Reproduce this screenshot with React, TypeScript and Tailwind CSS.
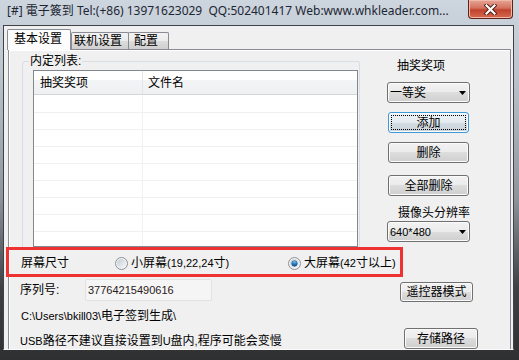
import React from 'react';

const ui = "font-['Liberation_Sans','Noto_Sans_CJK_SC',sans-serif]";

function L({ children }: { children: React.ReactNode }) {
  return <span className="text-[11px]">{children}</span>;
}

function Btn({ children, className = '', focused = false }: { children: React.ReactNode; className?: string; focused?: boolean }) {
  return (
    <div
      className={`relative flex items-center justify-center rounded-[3px] border text-[12px] leading-[14px] text-black shadow-[inset_0_0_0_1px_#fbfbfb] ${
        focused
          ? 'border-[#3c9ad8] bg-[linear-gradient(to_bottom,#eef3f6_0%,#e4ebf0_50%,#d4dde4_50%,#c8d2da_100%)]'
          : 'border-[#707070] bg-[linear-gradient(to_bottom,#f2f2f2_0%,#ebebeb_50%,#dddddd_50%,#cfcfcf_100%)]'
      } ${className}`}
    >
      {focused && <span className="absolute inset-[2px] border border-dotted border-black" />}
      {children}
    </div>
  );
}

function Combo({ value, className = '' }: { value: React.ReactNode; className?: string }) {
  return (
    <div className={`flex h-[21px] w-[83px] items-center rounded-[3px] border border-[#707070] bg-[linear-gradient(to_bottom,#f2f2f2_0%,#ebebeb_50%,#dddddd_50%,#cfcfcf_100%)] pl-[2px] text-[12px] leading-[14px] text-black shadow-[inset_0_0_0_1px_#fbfbfb] ${className}`}>
      <span>{value}</span>
      <svg className="ml-auto mr-[3px]" width="7" height="4" viewBox="0 0 7 4">
        <path d="M0 0 H7 L3.5 4 Z" fill="#000" />
      </svg>
    </div>
  );
}

function Radio({ checked, id }: { checked?: boolean; id: string }) {
  return (
    <svg width="13" height="13" viewBox="0 0 13 13" className="shrink-0">
      <defs>
        <linearGradient id={`bg-${id}`} x1="0" y1="0" x2="1" y2="1">
          <stop offset="0" stopColor="#c3ccd6" />
          <stop offset="1" stopColor="#f6f8fa" />
        </linearGradient>
        <linearGradient id={`dot-${id}`} x1="0" y1="0" x2="0" y2="1">
          <stop offset="0" stopColor="#8fd4f5" />
          <stop offset="0.5" stopColor="#2a8bd0" />
          <stop offset="1" stopColor="#0b4c90" />
        </linearGradient>
      </defs>
      <circle cx="6.5" cy="6.5" r="6" fill="#f4f4f4" stroke="#8c8f94" />
      <circle cx="6.5" cy="6.5" r="4.5" fill={`url(#bg-${id})`} />
      {checked && <circle cx="6.5" cy="6.5" r="2.8" fill={`url(#dot-${id})`} stroke="#1c3f70" strokeWidth="0.6" />}
    </svg>
  );
}

function CloseButton() {
  return (
    <div className="ml-auto mr-[6px] flex h-[19px] w-[45px] items-center justify-center rounded-b-[4px] border border-t-0 border-[#5e2219] bg-[linear-gradient(to_bottom,#e7a596_0%,#d2715d_45%,#c0432c_55%,#d66a4f_100%)] shadow-[inset_0_0_0_1px_#f0b8a8]">
      <svg width="13" height="11" viewBox="0 0 13 11">
        <path d="M2.5 1.5 L10.5 9.5 M10.5 1.5 L2.5 9.5" stroke="#4a1a12" strokeWidth="4" strokeLinecap="square" />
        <path d="M2.5 1.5 L10.5 9.5 M10.5 1.5 L2.5 9.5" stroke="#ffffff" strokeWidth="2.2" strokeLinecap="square" />
      </svg>
    </div>
  );
}

export default function App() {
  const rows = Array.from({ length: 9 });
  return (
    <div className={`flex h-[360px] w-[519px] flex-col overflow-hidden bg-[linear-gradient(to_bottom,#cdd5de_0%,#bcc5cf_20%,#8d949c_55%,#3e4043_80%,#2f3032_100%)] ${ui}`}>
      {/* title bar */}
      <div className="flex h-[25px] shrink-0 items-start">
        <div className="whitespace-pre pl-[7px] pt-[3px] font-['Noto_Sans','Noto_Sans_CJK_SC',sans-serif] text-[12px] leading-[16px] text-[#1d2733]">
          [#] 電子簽到 Tel:(+86) 13971623029  QQ:502401417 Web:www.whkleader.com...
        </div>
        <CloseButton />
      </div>

      {/* client area */}
      <div className="ml-[3px] mr-[5px] flex h-[325px] flex-col border border-[#3f4246] border-b-[#fafafa] bg-[#f0f0f0] pl-[3px] pr-[2px] pt-[3px]">
        {/* tabs */}
        <div className="flex h-[20px] shrink-0 items-end">
          <div className="relative z-10 -mb-px h-[21px] w-[64px] rounded-t-[2px] border border-b-0 border-[#898c95] bg-[#fcfcfc] pl-[6px] pt-[2px] text-[12px] leading-[14px] text-black">
            基本设置
          </div>
          <div className="h-[17px] w-[58px] rounded-t-[2px] border border-b-0 border-[#898c95] bg-[linear-gradient(to_bottom,#f3f3f3_0%,#ebebeb_50%,#dddddd_50%,#cfcfcf_100%)] pl-[2px] pt-px text-[12px] leading-[14px] text-black">
            联机设置
          </div>
          <div className="-ml-px h-[17px] w-[41px] rounded-t-[2px] border border-b-0 border-[#898c95] bg-[linear-gradient(to_bottom,#f3f3f3_0%,#ebebeb_50%,#dddddd_50%,#cfcfcf_100%)] pl-[5px] pt-px text-[12px] leading-[14px] text-black">
            配置
          </div>
        </div>

        {/* tab page */}
        <div className="ml-px flex flex-1 flex-col border border-b-0 border-[#898c95] shadow-[inset_1px_1px_0_#ffffff] text-[12px] leading-[14px] text-black">
          {/* list + right column */}
          <div className="flex h-[197px] shrink-0">
            <fieldset className="ml-[13px] mt-[4px] h-[193px] w-[338px] rounded-t-[3px] border border-b-0 border-[#d5dfe5] pl-[6px]">
              <legend className="px-px text-[12px] leading-[14px]">内定列表:</legend>
              <div className="ml-[4px] mt-[2px] flex h-[177px] w-[325px] flex-col overflow-hidden border border-[#828790] bg-white">
                <div className="flex h-[24px] shrink-0 border-b border-[#d5d5d5] bg-[linear-gradient(to_bottom,#ffffff_0%,#ffffff_40%,#f3f4f6_41%,#eff0f2_100%)]">
                  <div className="flex w-[109px] items-center border-r border-[#e3e5e8] pl-[6px]">抽奖奖项</div>
                  <div className="flex items-center pl-[5px]">文件名</div>
                </div>
                <div className="h-px shrink-0" />
                {rows.map((_, i) => (
                  <div key={i} className="flex h-[17px] shrink-0 border-b border-[#f0f0f0]">
                    <div className="w-[109px] border-r border-[#f0f0f0]" />
                  </div>
                ))}
              </div>
            </fieldset>

            <div className="ml-[27px] flex w-[83px] flex-col">
              <div className="mt-[9px] pl-[10px]">抽奖奖项</div>
              <Combo className="mt-[9px]" value="一等奖" />
              <Btn focused className="ml-px mt-[9px] h-[21px] w-[81px]">添加</Btn>
              <Btn className="ml-px mt-[9px] h-[21px] w-[81px]">删除</Btn>
              <Btn className="ml-px mt-[12px] h-[21px] w-[81px]">全部删除</Btn>
              <div className="mt-[10px] whitespace-nowrap pl-[11px]">摄像头分辨率</div>
              <Combo className="mt-px" value={<L>640*480</L>} />
            </div>
          </div>

          {/* highlighted screen size row */}
          <div className="-ml-[3px] flex h-[30px] w-[397px] shrink-0 items-center border-[3px] border-[#ee3131] pl-[12px] pt-[2px]">
            <div className="w-[94px]">屏幕尺寸</div>
            <div className="flex w-[173px] items-center gap-[3px]">
              <Radio id="small" />
              <span>
                小屏幕<L>(19,22,24</L>寸<L>)</L>
              </span>
            </div>
            <div className="flex items-center gap-[3px]">
              <Radio id="big" checked />
              <span>
                大屏幕<L>(42</L>寸以上<L>)</L>
              </span>
            </div>
          </div>

          {/* serial row */}
          <div className="mt-[2px] flex h-[22px] shrink-0 items-start pl-[11px]">
            <div className="flex h-[22px] w-[65px] items-center">序列号:</div>
            <div className="flex h-[22px] w-[127px] items-center rounded-[2px] border border-[#e2e2e2] bg-[#f5f5f5] pl-[2px] text-[11px] text-[#2a2020]">
              37764215490616
            </div>
            <Btn className="ml-[188px] mt-[3px] h-[20px] w-[73px]">遥控器模式</Btn>
          </div>

          {/* path */}
          <div className="mt-[8px] pl-[12px]">
            <L>C:\Users\bkill03\</L>电子签到生成<L>\</L>
          </div>

          {/* usb note + store path */}
          <div className="mt-[5px] flex items-start pl-[11px]">
            <div className="mt-[6px] w-[384px] whitespace-nowrap">
              <L>USB</L>路径不建议直接设置到<L>U</L>盘内<L>,</L>程序可能会变慢
            </div>
            <Btn className="h-[21px] w-[74px]">存储路径</Btn>
          </div>
        </div>
      </div>
    </div>
  );
}
